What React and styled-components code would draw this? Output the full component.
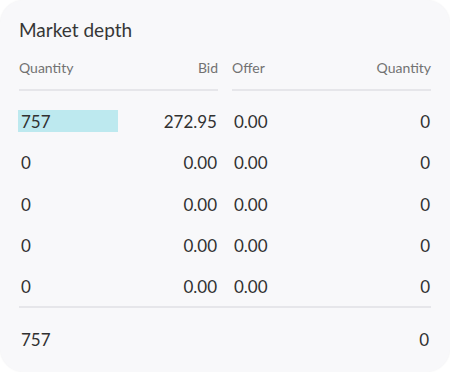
import React from "react";
import styled, { createGlobalStyle } from "styled-components";

const Global = createGlobalStyle`
  html, body { margin: 0; padding: 0; background: #ffffff; }
  body { font-family: Lato, "Noto Sans", sans-serif; }
`;

const Card = styled.div`
  box-sizing: border-box;
  width: 450px;
  height: 372px;
  background: #f8f8fa;
  border-radius: 24px;
  box-shadow: 0 0 2px rgba(0, 0, 0, 0.06);
  padding: 17px 19px 0 19px;
  color: #2b2b2b;
`;

const Title = styled.h2`
  margin: 0;
  font-size: 19px;
  font-weight: 400;
  line-height: 26px;
  color: #363636;
`;

const Sides = styled.div`
  display: grid;
  grid-template-columns: 1fr 1fr;
  column-gap: 14px;
  margin-top: 15px;
`;

const Side = styled.div`
  display: flex;
  flex-direction: column;
`;

const Head = styled.div`
  display: flex;
  justify-content: space-between;
  font-size: 14px;
  color: #727272;
  height: 33px;
  line-height: 20px;
  border-bottom: 2px solid #e6e6ea;
  box-sizing: border-box;
`;

const Rows = styled.div`
  display: flex;
  flex-direction: column;
  padding-top: 10px;
`;

const Row = styled.div`
  position: relative;
  display: flex;
  justify-content: space-between;
  align-items: center;
  height: 41.25px;
  font-size: 17px;
  color: #313131;
`;

const Cell = styled.span`
  position: relative;
  padding-left: ${(p) => (p.$inset ? "2px" : "0")};
  padding-right: ${(p) => (p.$inset ? "0" : "1px")};
`;

const Bar = styled.span`
  position: absolute;
  left: -1px;
  top: 50%;
  height: 22px;
  margin-top: -12px;
  background: #bde9ef;
`;

const Footer = styled.div`
  display: flex;
  justify-content: space-between;
  align-items: center;
  border-top: 2px solid #e6e6ea;
  margin-top: -1px;
  height: 62px;
  font-size: 17px;
  padding: 0 2px;
  color: #313131;
`;

const bids = [
  { q: 757, p: "272.95", w: 100 },
  { q: 0, p: "0.00" },
  { q: 0, p: "0.00" },
  { q: 0, p: "0.00" },
  { q: 0, p: "0.00" },
];
const offers = [
  { q: 0, p: "0.00" },
  { q: 0, p: "0.00" },
  { q: 0, p: "0.00" },
  { q: 0, p: "0.00" },
  { q: 0, p: "0.00" },
];

export default function App() {
  return (
    <>
      <Global />
      <Card>
        <Title>Market depth</Title>
        <Sides>
          <Side>
            <Head>
              <span>Quantity</span>
              <span>Bid</span>
            </Head>
            <Rows>
              {bids.map((b, i) => (
                <Row key={i}>
                  {b.w ? <Bar style={{ width: b.w }} /> : null}
                  <Cell $inset>{b.q}</Cell>
                  <Cell>{b.p}</Cell>
                </Row>
              ))}
            </Rows>
          </Side>
          <Side>
            <Head>
              <span>Offer</span>
              <span>Quantity</span>
            </Head>
            <Rows>
              {offers.map((o, i) => (
                <Row key={i}>
                  <Cell $inset>{o.p}</Cell>
                  <Cell>{o.q}</Cell>
                </Row>
              ))}
            </Rows>
          </Side>
        </Sides>
        <Footer>
          <span>757</span>
          <span>0</span>
        </Footer>
      </Card>
    </>
  );
}
